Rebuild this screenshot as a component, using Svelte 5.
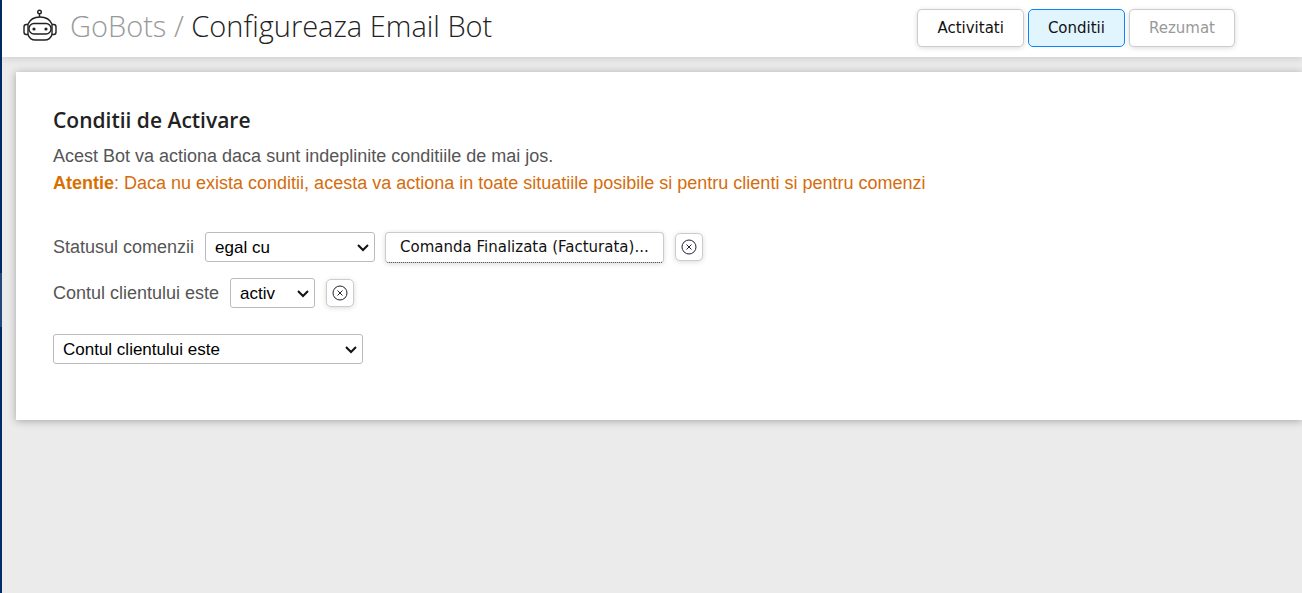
<script>
    let steps = [
        { name: "Activitati", state: "" },
        { name: "Conditii", state: "active" },
        { name: "Rezumat", state: "muted" },
    ];

    let operator = "egal cu";
    let account = "activ";
    let newCondition = "Contul clientului este";
</script>

<div class="app">
    <div class="sidebar"><span class="thumb"></span></div>
    <div class="page">
        <header>
            <svg class="robot" viewBox="0 0 34 34" aria-hidden="true">
                <circle cx="16.500" cy="3" r="1.800" />
                <path d="M16.500 5v3" />
                <path d="M5 15C7 10.500 11.500 8 17 8s10 2.500 12 7" />
                <path d="M5 15.500H3.200Q1 15.500 1 18v5Q1 25.500 3.200 25.500H5z" />
                <path d="M29 15.500h1.800q2.200 0 2.200 2.500v5q0 2.500-2.200 2.500H29z" />
                <rect x="6" y="14.500" width="22" height="10.500" rx="5" />
                <path d="M5 25.500c1 3.500 4 5.500 7.500 5.500h9c3.500 0 6.500-2 7.500-5.500" />
                <circle class="eye" cx="11" cy="20" r="1.600" />
                <circle class="eye" cx="23" cy="20" r="1.600" />
            </svg>
            <h1><span>GoBots /</span> Configureaza Email Bot</h1>
            <nav>
                {#each steps as step}
                    <button class="step {step.state}">{step.name}</button>
                {/each}
            </nav>
        </header>

        <main>
            <h2>Conditii de Activare</h2>
            <p>Acest Bot va actiona daca sunt indeplinite conditiile de mai jos.</p>
            <p class="warning">
                <b>Atentie</b>: Daca nu exista conditii, acesta va actiona in toate situatiile posibile si pentru clienti si pentru comenzi
            </p>

            <div class="conditions">
                <div class="condition">
                    <label for="operator">Statusul comenzii</label>
                    <div class="select medium">
                        <select id="operator" bind:value={operator}>
                            <option>egal cu</option>
                            <option>diferit de</option>
                        </select>
                        <svg viewBox="0 0 12 8" aria-hidden="true"><path d="M1 1l5 5 5-5" /></svg>
                    </div>
                    <button class="value">Comanda Finalizata (Facturata)...</button>
                    {@render remove()}
                </div>
                <div class="condition">
                    <label for="account">Contul clientului este</label>
                    <div class="select small">
                        <select id="account" bind:value={account}>
                            <option>activ</option>
                            <option>inactiv</option>
                        </select>
                        <svg viewBox="0 0 12 8" aria-hidden="true"><path d="M1 1l5 5 5-5" /></svg>
                    </div>
                    {@render remove()}
                </div>
            </div>

            <div class="select large">
                <select aria-label="Conditie" bind:value={newCondition}>
                    <option>Contul clientului este</option>
                    <option>Statusul comenzii</option>
                </select>
                <svg viewBox="0 0 12 8" aria-hidden="true"><path d="M1 1l5 5 5-5" /></svg>
            </div>
        </main>
    </div>
</div>

{#snippet remove()}
    <button class="remove" aria-label="Sterge">
        <svg viewBox="0 0 16 16" aria-hidden="true">
            <circle cx="8" cy="8" r="7" />
            <path d="M5.500 5.500l5 5M10.500 5.500l-5 5" />
        </svg>
    </button>
{/snippet}

<style>
    :global(body) {
        background: #ebebeb;
    }

    .app {
        display: flex;
        min-height: 100vh;
        overflow: hidden;
        font-family: "Liberation Sans", Arial, sans-serif;
        font-size: 18px;
        color: #555;
    }

    .sidebar {
        flex: none;
        width: 2px;
        background: #002b66;
    }

    .thumb {
        display: block;
        height: 54px;
        margin-top: 273px;
        background: #26477a;
    }

    .page {
        flex: 1;
        min-width: 0;
    }

    header {
        display: flex;
        align-items: flex-start;
        box-sizing: border-box;
        height: 57px;
        padding: 9px 67px 0 21px;
        background: white;
        box-shadow: 0 1px 8px rgba(0, 0, 0, 0.15);
    }

    .robot {
        flex: none;
        width: 34px;
        height: 34px;
        margin-right: 13px;
        fill: none;
        stroke: #222;
        stroke-width: 1.4;
    }

    .robot .eye {
        fill: #222;
        stroke: none;
    }

    h1 {
        margin: 0;
        font: 300 29px/34px "Open Sans", sans-serif;
        color: #222;
        white-space: nowrap;
    }

    h1 span {
        color: #999;
    }

    nav {
        display: flex;
        gap: 4px;
        margin-left: auto;
    }

    button {
        box-sizing: border-box;
        border: 1px solid #ccc;
        border-radius: 5px;
        background: white;
        box-shadow: 0 1px 5px rgba(0, 0, 0, 0.15);
        font: 15px "DejaVu Sans", Verdana, sans-serif;
        color: #111;
        white-space: nowrap;
        cursor: pointer;
    }

    .step {
        height: 38px;
        padding: 0 19px;
    }

    .step.active {
        border-color: #0a84ff;
        background: #e1f5fe;
        box-shadow: none;
    }

    .step.muted {
        color: #999;
    }

    main {
        margin: 15px 0 0 14px;
        padding: 32px 37px 56px;
        background: white;
        box-shadow: 0 1px 8px rgba(0, 0, 0, 0.3);
    }

    h2 {
        margin: 0 0 7px;
        font: 600 21px/32px "Open Sans", sans-serif;
        color: #222;
    }

    p {
        margin: 0;
        line-height: 27px;
    }

    .warning {
        color: #d56c0c;
    }

    .warning b {
        color: #d87000;
    }

    .conditions {
        display: grid;
        gap: 16px;
        margin: 35px 0 26px;
    }

    .condition {
        display: flex;
        align-items: center;
        height: 30px;
    }

    label {
        margin-right: 11px;
    }

    .select {
        position: relative;
    }

    .select.small {
        width: 85px;
    }

    .select.medium {
        width: 170px;
    }

    .select.large {
        width: 310px;
    }

    select {
        display: block;
        box-sizing: border-box;
        width: 100%;
        height: 30px;
        padding: 0 24px 0 9px;
        border: 1px solid #bbb;
        border-radius: 3px;
        background: white;
        font: 17px "Liberation Sans", Arial, sans-serif;
        color: black;
        appearance: none;
    }

    .select svg {
        position: absolute;
        top: 12px;
        right: 6px;
        width: 12px;
        height: 8px;
        fill: none;
        stroke: #111;
        stroke-width: 2;
        pointer-events: none;
    }

    .value {
        height: 31px;
        margin-left: 10px;
        padding: 0 14px;
        border-bottom: 1px dotted #222;
        border-radius: 4px;
    }

    .remove {
        display: grid;
        place-items: center;
        width: 28px;
        height: 28px;
        margin-left: 11px;
        padding: 0;
    }

    .remove svg {
        width: 16px;
        height: 16px;
        fill: none;
        stroke: #223;
    }
</style>
